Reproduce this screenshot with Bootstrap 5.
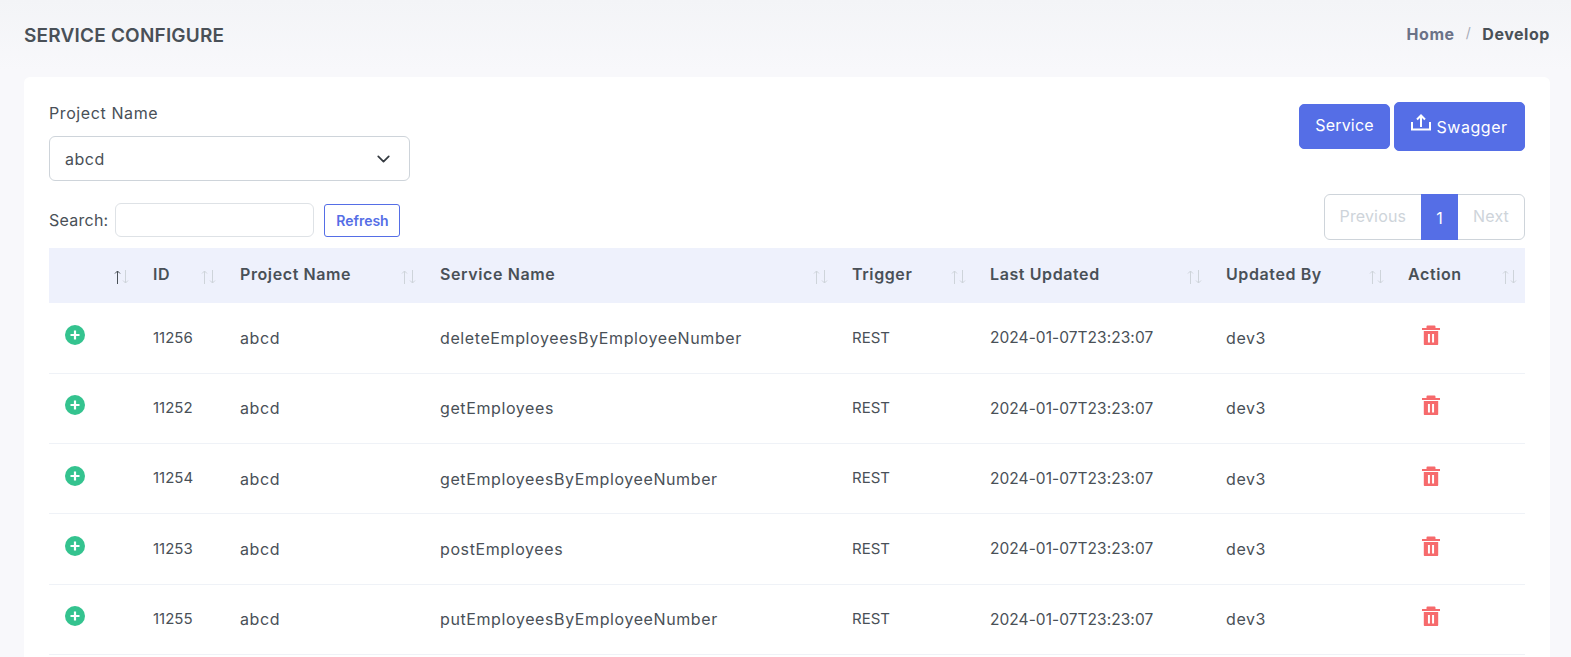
<!DOCTYPE html>
<html lang="en">
<head>
  <meta charset="UTF-8" />
  <meta name="viewport" content="width=device-width, initial-scale=1.0"/>
  <title>Service Configure</title>
  <link rel="stylesheet" href="https://cdn.jsdelivr.net/npm/bootstrap@5.3.0/dist/css/bootstrap.min.css"/>
  <style>
    html, body { height: 100%; overflow: hidden; }
    body {
      background: linear-gradient(#f3f4f7, #f8f8fb 70px);
      font-family: Inter, "Open Sans", sans-serif;
      font-size: 15px;
      color: #495057;
    }
    .page-wrap { padding: 0 21px 0 24px; }
    .title-bar { height: 77px; padding-bottom: 4px; }
    .page-title { font-size: 19px; font-weight: 600; letter-spacing: .2px; color: #495057; margin: 0; }
    .crumbs { --bs-breadcrumb-item-padding-x: 11px; --bs-breadcrumb-divider-color: #a6abb8; font-size: 16px; font-weight: 700; letter-spacing: .55px; margin: 0 0 6px; }
    .crumbs a { color: #6b7287; text-decoration: none; }
    .crumbs .breadcrumb-item.active { color: #495057; }
    .crumbs .breadcrumb-item + .breadcrumb-item::before { font-weight: 400; font-size: 14px; }
    .panel { border: 0; border-radius: 6px; min-height: 700px; padding: 25px 25px 0; }
    .field-label { font-size: 16px; letter-spacing: .6px; margin-bottom: 11px; line-height: 23px; color: #495057; }
    .project-select { width: 361px; height: 45px; font-size: 16px; letter-spacing: .5px; color: #495057; padding-left: 15px; border-color: #ced4da; background-size: 19px 14px; background-position: right 16px center; }
    .btn-brand { background: #556ee6; border-color: #556ee6; color: #fff; font-size: 16px; font-weight: 400; letter-spacing: .2px; border-radius: 5px; padding-left: 0; padding-right: 0; }
    .btn-service { width: 91px; height: 45px; padding-top: 4px; padding-bottom: 8px; }
    .btn-swagger { width: 131px; height: 49px; margin-left: 4px; letter-spacing: .55px; }
    .btn-swagger svg { margin-top: -10px; }
    .search-row { margin-top: 13px; height: 46px; }
    .search-group { margin-top: 6px; }
    .search-group label { font-size: 16px; letter-spacing: .25px; }
    .search-input { width: 199px; height: 34px; margin-left: 7px; }
    .btn-refresh { height: 33px; width: 76px; margin-left: 10px; padding: 0; font-size: 14px; font-weight: 600; color: #556ee6; border-color: #556ee6; border-radius: 3px; }
    .pager { margin: 0; font-size: 16px; letter-spacing: .15px; }
    .pager .page-link { height: 46px; line-height: 30px; padding-left: 15px; padding-right: 15px; color: #ced4da; border-color: #ced4da; background: #fff; }
    .pager .page-item.active .page-link { background: #556ee6; border-color: #556ee6; color: #fff; width: 37px; padding: 8px 0; text-align: center; }
    .grid-table { table-layout: fixed; width: 100%; margin: 8px 0 0; color: #495057; }
    .grid-table th { background: #eef1fc; height: 55px; padding: 0 8px 0 16px; font-weight: 600; font-size: 16px; letter-spacing: .6px; vertical-align: middle; border: 0; color: #495057; }
    .th-label { margin-bottom: 4px; }
    .grid-table td { height: 70.3px; padding: 0 16px; vertical-align: middle; font-size: 15px; border-color: #eff2f7; color: #495057; }
    .grid-table td.icon-cell { padding-bottom: 6px; }
    .grid-table td.text-wide { font-size: 16px; letter-spacing: .6px; }
    .grid-table td.text-date { font-size: 15.5px; letter-spacing: .05px; }
    .grid-table col:nth-child(1) { width: 88px; }
    .grid-table col:nth-child(2) { width: 87px; }
    .grid-table col:nth-child(3) { width: 200px; }
    .grid-table col:nth-child(4) { width: 412px; }
    .grid-table col:nth-child(5) { width: 138px; }
    .grid-table col:nth-child(6) { width: 236px; }
    .grid-table col:nth-child(7) { width: 182px; }
    .grid-table col:nth-child(8) { width: 133px; }
    .sort-arrows { flex: none; margin-top: 3px; color: #ced4da; }
    .grid-table td.trash-cell { padding-left: 30px; }
  </style>
</head>
<body>
  <svg width="0" height="0" class="d-block">
    <symbol id="ico-plus" viewBox="0 0 20 20">
      <circle cx="10" cy="10" r="10" fill="#34c38f"/>
      <path d="M10 5.5v9M5.5 10h9" stroke="#fff" stroke-width="2.2"/>
    </symbol>
    <symbol id="ico-trash" viewBox="2 2 20 20" preserveAspectRatio="none">
      <path fill="#f66a6c" fill-rule="evenodd" d="M4 8H20V21C20 21.5523 19.5523 22 19 22H5C4.44772 22 4 21.5523 4 21V8ZM7 5V3.5C7 2.9 7.4 2.5 8 2.5H16C16.6 2.5 17 2.9 17 3.5V5H22V7H2V5H7ZM8.6 11V19.5H10.8V11H8.6ZM13.2 11V19.5H15.4V11H13.2Z"/>
    </symbol>
    <symbol id="ico-sort" viewBox="0 0 15 14">
      <path d="M3.5 14V1M1 3.5 3.5 1 6 3.5" fill="none" stroke="currentColor"/>
      <path d="M11.5 0v13M9 10.5l2.5 2.5 2.5-2.5" fill="none" stroke="#ced4da"/>
    </symbol>
  </svg>

  <div class="page-wrap">
    <div class="title-bar d-flex justify-content-between align-items-center">
      <h4 class="page-title text-uppercase">Service Configure</h4>
      <ol class="breadcrumb crumbs">
        <li class="breadcrumb-item"><a href="#">Home</a></li>
        <li class="breadcrumb-item active">Develop</li>
      </ol>
    </div>

    <div class="card panel">
      <div class="d-flex justify-content-between align-items-start">
        <div>
          <label class="form-label field-label d-block">Project Name</label>
          <select class="form-select project-select"><option>abcd</option></select>
        </div>
        <div class="d-flex align-items-center">
          <button class="btn btn-brand btn-service">Service</button>
          <button class="btn btn-brand btn-swagger">
            <svg width="20" height="18" viewBox="0 0 20 18" fill="none" stroke="#fff" stroke-width="2"><path d="M1 8v7.5h18V8M10 13V2M6 5.5 10 1.5l4 4"/></svg>
            Swagger
          </button>
        </div>
      </div>

      <div class="d-flex justify-content-between align-items-center search-row">
        <div class="d-flex align-items-center search-group">
          <label>Search:</label>
          <input type="search" class="form-control search-input"/>
          <button class="btn btn-refresh">Refresh</button>
        </div>
        <ul class="pagination pager">
          <li class="page-item disabled"><a class="page-link" href="#">Previous</a></li>
          <li class="page-item active"><a class="page-link" href="#">1</a></li>
          <li class="page-item disabled"><a class="page-link" href="#">Next</a></li>
        </ul>
      </div>

      <table class="table grid-table">
        <colgroup><col><col><col><col><col><col><col><col></colgroup>
        <thead id="head"></thead>
        <tbody id="rows"></tbody>
      </table>
    </div>
  </div>

  <script src="https://cdn.jsdelivr.net/npm/bootstrap@5.3.0/dist/js/bootstrap.bundle.min.js"></script>
  <script>
    const cols = ["", "ID", "Project Name", "Service Name", "Trigger", "Last Updated", "Updated By", "Action"];
    const data = [
      [11256, "deleteEmployeesByEmployeeNumber"],
      [11252, "getEmployees"],
      [11254, "getEmployeesByEmployeeNumber"],
      [11253, "postEmployees"],
      [11255, "putEmployeesByEmployeeNumber"]
    ];

    document.getElementById("head").innerHTML = "<tr>" + cols.map((c, i) => `
      <th><div class="d-flex justify-content-between align-items-center">
        <span class="th-label">${c}</span>
        <svg class="sort-arrows" width="15" height="14"><use href="#ico-sort" ${i === 0 ? 'color="#495057"' : ''}/></svg>
      </div></th>`).join("") + "</tr>";

    document.getElementById("rows").innerHTML = data.map(r => `
      <tr>
        <td class="icon-cell"><svg class="d-block" width="20" height="20"><use href="#ico-plus"/></svg></td>
        <td>${r[0]}</td>
        <td class="text-wide">abcd</td>
        <td class="text-wide">${r[1]}</td>
        <td>REST</td>
        <td class="text-date">2024-01-07T23:23:07</td>
        <td class="text-wide">dev3</td>
        <td class="icon-cell trash-cell"><svg class="d-block" width="18" height="20"><use href="#ico-trash"/></svg></td>
      </tr>`).join("");
  </script>
</body>
</html>
